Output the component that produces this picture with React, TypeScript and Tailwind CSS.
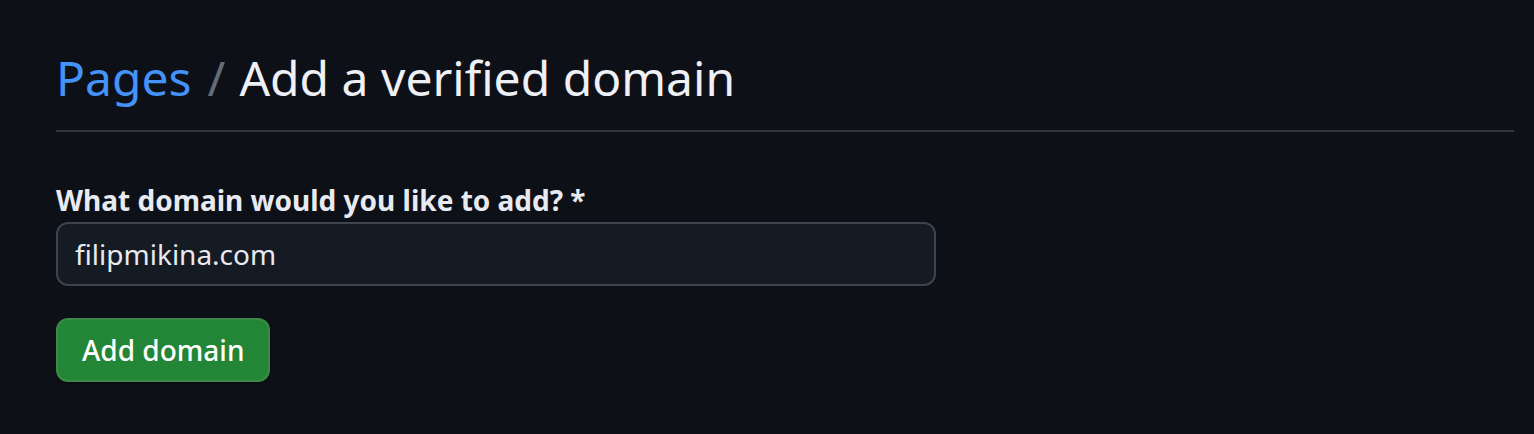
import React from "react";

export default function App() {
  return (
    <div
      className="min-h-[434px] w-full bg-[#0d1117] pl-[56px] pr-[20px] pt-[42px]"
      style={{ fontFamily: '"Noto Sans", "Liberation Sans", sans-serif' }}
    >
      <div className="border-b-2 border-[#30363d] pb-[16px]">
        <h1 className="text-[48px] leading-[72px] font-normal text-[#eef0f6]">
          <a className="text-[#4493f8]">Pages</a>
          <span className="ml-[16px] mr-[14px] text-[#656c76]">/</span>
          <span>Add a verified domain</span>
        </h1>
      </div>
      <div className="pt-[48px]">
        <label className="block text-[28px] leading-[40px] font-bold text-[#e8eaf2]">
          What domain would you like to add? *
        </label>
        <div className="mt-[2px] flex h-[64px] w-[880px] items-center rounded-[12px] border-2 border-[#3d444d] bg-[#151b23] px-[17px] text-[28px] text-[#e8eaf0]">
          filipmikina.com
        </div>
        <button className="mt-[32px] flex h-[64px] items-center rounded-[12px] border-2 border-[#3b8b46] bg-[#238636] px-[24px] text-[28px] font-medium text-white shadow-[0_2px_2px_rgba(0,0,0,0.3)]">
          Add domain
        </button>
      </div>
    </div>
  );
}
